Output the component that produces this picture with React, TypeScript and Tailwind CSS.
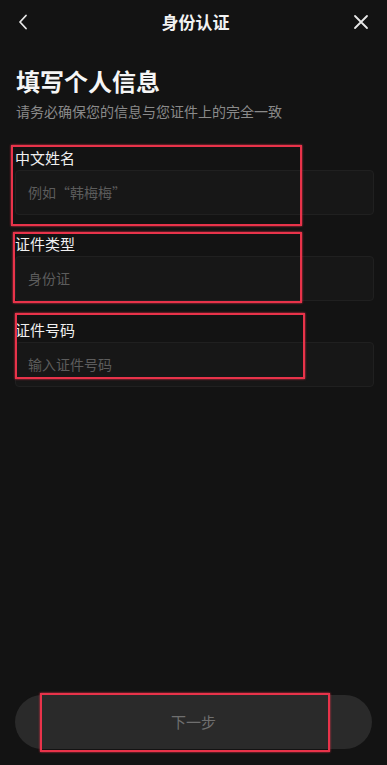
import React from "react";

const font = { fontFamily: '"Noto Sans CJK SC", "Noto Sans", sans-serif' };

function Field({ label, placeholder }: { label: string; placeholder: string }) {
  return (
    <div className="flex flex-col">
      <div className="h-[20px] text-[15px] leading-[20px] text-[#f0f0f0]">{label}</div>
      <div className="mt-[2px] h-[45px] rounded-[4px] border border-[#202020] bg-[#171717] flex items-center pl-[12px] text-[14px] text-[#5c5c5c]">
        {placeholder}
      </div>
    </div>
  );
}

export default function App() {
  return (
    <div className="relative w-[387px] h-[765px] bg-[#131313] flex flex-col overflow-hidden" style={font}>
      <div className="h-[44px] flex items-center justify-between px-[16px]">
        <svg width="12" height="16" viewBox="0 0 12 16" className="ml-[1px]">
          <path d="M9 1.5 L3 8 L9 14.5" fill="none" stroke="#e8e8e8" strokeWidth="1.8" strokeLinecap="round" strokeLinejoin="round" />
        </svg>
        <div className="text-[17px] font-bold text-[#f2f2f2] ml-[9px]">身份认证</div>
        <svg width="16" height="16" viewBox="0 0 16 16" className="mr-[2px]">
          <path d="M2 2 L14 14 M14 2 L2 14" stroke="#e8e8e8" strokeWidth="1.8" strokeLinecap="round" />
        </svg>
      </div>

      <div className="px-[16px] mt-[21px]">
        <div className="text-[24px] leading-[32px] font-bold text-[#f5f5f5]">填写个人信息</div>
        <div className="mt-[4px] text-[14px] leading-[20px] text-[#8a8a8a]">请务必确保您的信息与您证件上的完全一致</div>
      </div>

      <div className="mt-[27px] pl-[15px] pr-[13px] flex flex-col gap-[19px]">
        <Field label="中文姓名" placeholder="例如“韩梅梅”" />
        <Field label="证件类型" placeholder="身份证" />
        <Field label="证件号码" placeholder="输入证件号码" />
      </div>

      <div className="mt-auto mb-[16px] mx-[15px] h-[54px] rounded-full bg-[#2a2a2a] flex items-center justify-center text-[15px] text-[#6f6f6f]">
        下一步
      </div>

      <div className="absolute left-[11px] top-[145px] w-[291px] h-[81px] border-2 border-[#e8334a] shadow-[0_0_2px_#e8334a]" />
      <div className="absolute left-[13px] top-[232px] w-[289px] h-[71px] border-2 border-[#e8334a] shadow-[0_0_2px_#e8334a]" />
      <div className="absolute left-[15px] top-[313px] w-[290px] h-[66px] border-2 border-[#e8334a] shadow-[0_0_2px_#e8334a]" />
      <div className="absolute left-[40px] top-[693px] w-[290px] h-[59px] border-2 border-[#e8334a] shadow-[0_0_2px_#e8334a]" />
    </div>
  );
}
